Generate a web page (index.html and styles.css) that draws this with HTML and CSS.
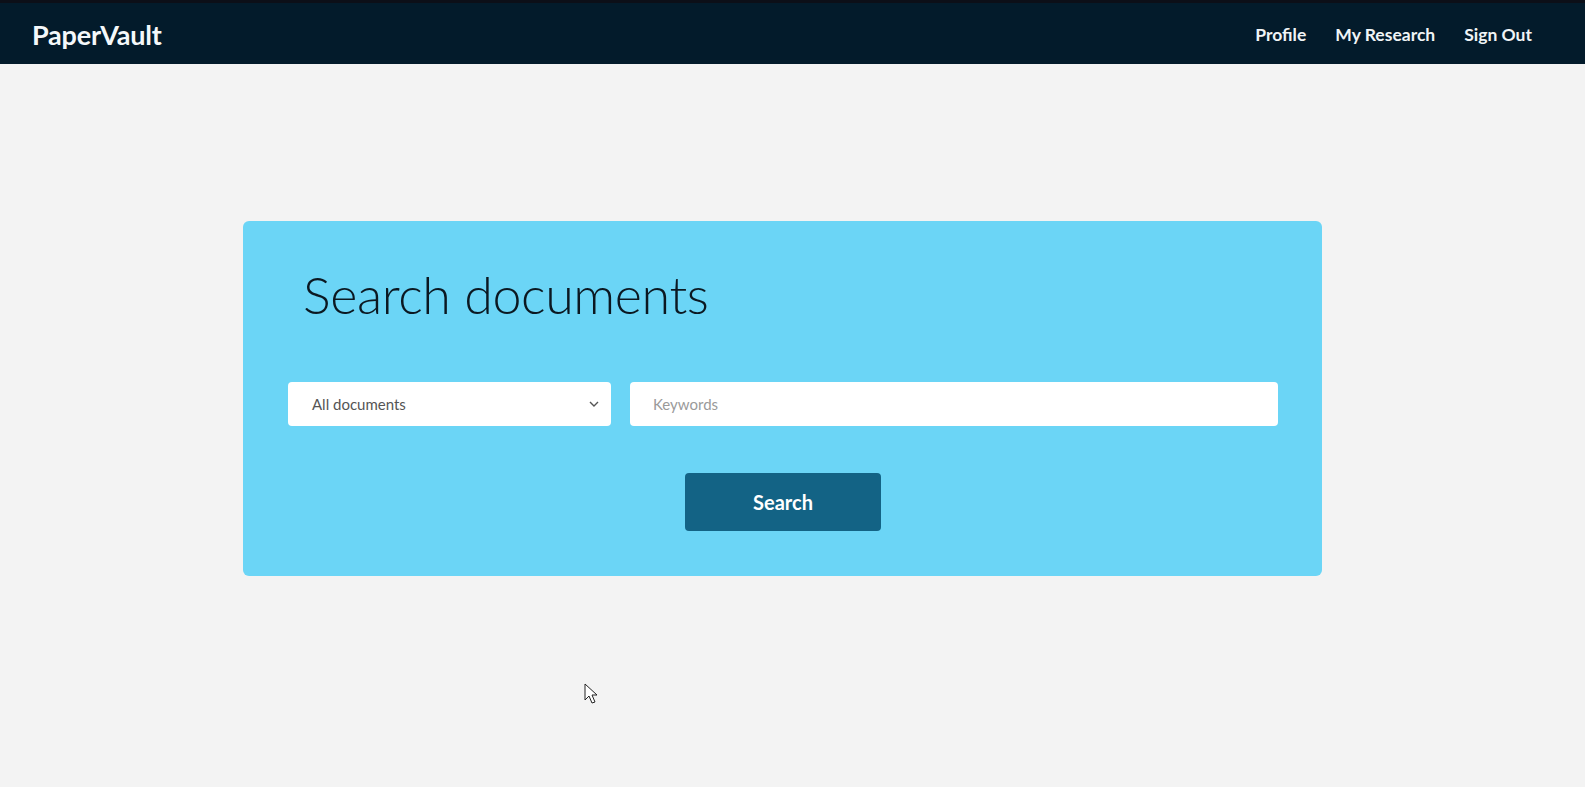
FILE: index.html
```html
<!DOCTYPE html>
<html>
<head>
<meta charset="utf-8">
<title>PaperVault</title>
<link rel="stylesheet" href="styles.css">
</head>
<body>
<header class="navbar">
  <a class="brand" href="#">PaperVault</a>
  <nav class="nav-links">
    <a href="#">Profile</a>
    <a href="#">My Research</a>
    <a href="#">Sign Out</a>
  </nav>
</header>
<main class="main">
  <section class="search-card">
    <h1 class="title">Search documents</h1>
    <form class="search-form">
      <div class="fields">
        <div class="select-wrap">
          <span class="select-text">All documents</span>
          <svg class="chev" width="10" height="6" viewBox="0 0 10 6"><path d="M1 1l4 4 4-4" fill="none" stroke="#555" stroke-width="1.4"/></svg>
        </div>
        <div class="input-wrap"><span class="placeholder">Keywords</span></div>
      </div>
      <button type="button" class="search-btn">Search</button>
    </form>
  </section>
</main>
<svg class="cursor" width="14" height="22" viewBox="0 0 14 22"><path d="M1 1v16l4-4 3 7 3-1-3-7h5z" fill="#fff" stroke="#222" stroke-width="1"/></svg>
</body>
</html>
```
FILE: styles.css
```css
html, body { margin: 0; padding: 0; }
body {
  background: #f3f3f3;
  font-family: "Lato", "Open Sans", sans-serif;
  height: 787px;
  overflow: hidden;
}
.navbar {
  height: 61px;
  border-top: 3px solid #0c0f18;
  background: #031b2b;
  display: flex;
  align-items: center;
  justify-content: space-between;
  padding: 0 53px 0 32px;
}
.brand {
  color: #f4f8fa;
  text-decoration: none;
  font-weight: 700;
  font-size: 27px;
  letter-spacing: -0.2px;
  margin-top: 2px;
}
.nav-links { display: flex; gap: 29px; margin-top: 2px; }
.nav-links a {
  color: #f0f4f6;
  text-decoration: none;
  font-weight: 700;
  font-size: 17.5px;
}
.main { padding: 157px 0 0 243px; }
.search-card {
  width: 1079px;
  height: 355px;
  box-sizing: border-box;
  background: #6bd5f6;
  border-radius: 6px;
  padding: 40px 44px 0 45px;
}
.title {
  margin: 0 0 0 15px;
  font-weight: 300;
  font-size: 52px;
  line-height: 66px;
  color: #0b1821;
  letter-spacing: -0.4px;
}
.search-form { margin-top: 55px; display: flex; flex-direction: column; align-items: center; }
.fields { display: flex; gap: 19px; width: 100%; }
.select-wrap, .input-wrap {
  height: 44px;
  background: #fff;
  border-radius: 4px;
  display: flex;
  align-items: center;
  box-sizing: border-box;
}
.select-wrap { width: 323px; padding: 0 12px 0 24px; justify-content: space-between; }
.input-wrap { flex: 1; padding: 0 23px; }
.select-text { font-size: 15px; color: #555; }
.placeholder { font-size: 15px; color: #9a9a9a; }
.search-btn {
  margin-top: 47px;
  width: 196px;
  height: 58px;
  border: none;
  border-radius: 4px;
  background: #136385;
  color: #fff;
  font-family: inherit;
  font-weight: 700;
  font-size: 20px;
}
.cursor { position: absolute; left: 584px; top: 683px; }
```
